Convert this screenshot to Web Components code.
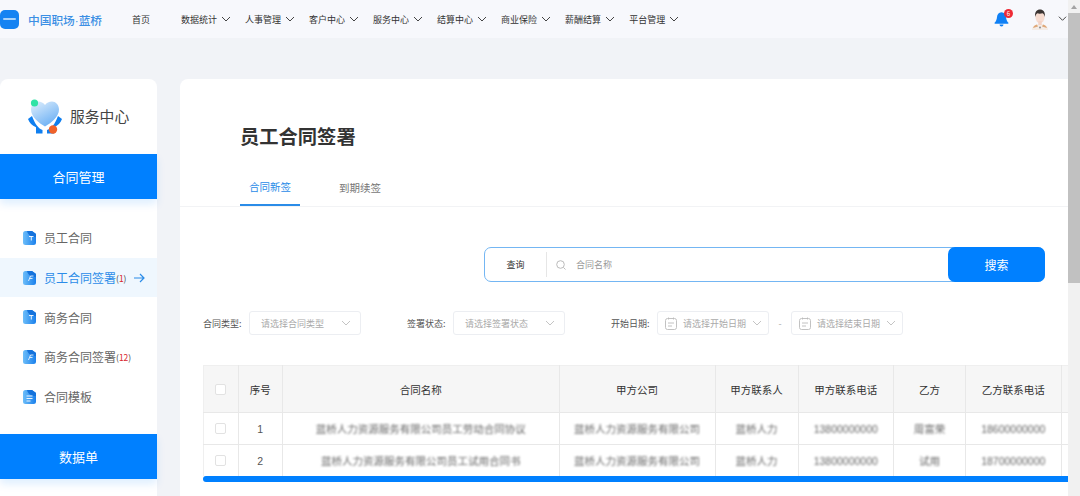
<!DOCTYPE html>
<html lang="zh">
<head>
<meta charset="utf-8">
<title>员工合同签署</title>
<style>
html, body { margin: 0; height: 100%; overflow: hidden; }
body { font-family: "Noto Sans CJK SC", "Noto Sans", sans-serif; color: #333; background: #f1f3f7; }
side-item b { font-weight: 400; color: #d9262c; }
</style>
</head>
<body>
<app-shell>
    <top-bar></top-bar>
    <side-menu slot="side">
        <side-item icon="plus">员工合同</side-item>
        <side-item icon="sign" active>员工合同签署<span slot="count">(<b>1</b>)</span></side-item>
        <side-item icon="plus">商务合同</side-item>
        <side-item icon="sign">商务合同签署<span slot="count">(<b>12</b>)</span></side-item>
        <side-item icon="lines">合同模板</side-item>
    </side-menu>
    <main-panel slot="main" heading="员工合同签署">
        <search-box></search-box>
        <filter-row></filter-row>
        <contract-table></contract-table>
    </main-panel>
</app-shell>

<script>
const chevron = (size, color) => `<svg width="${size}" height="${size}" viewBox="0 0 10 10" fill="none" stroke="${color}" stroke-width="1"><path d="M1 3l4 4 4-4"/></svg>`;

class AppShell extends HTMLElement {
    constructor() {
        super();
        this.attachShadow({ mode: 'open' });
        this.shadowRoot.innerHTML = `<style>
        :host { display: grid; grid-template-columns: 1fr 12px; width: 1080px; height: 496px; overflow: hidden; }
        .page { display: flex; flex-direction: column; min-width: 0; height: 496px; overflow: hidden; }
        .body { display: flex; gap: 23px; padding-top: 41px; flex: 1; min-height: 0; }
        .bar { background: #f1f1f1; display: flex; flex-direction: column; align-items: center; height: 496px; }
        .arrow { height: 13px; display: flex; align-items: center; justify-content: center; }
        .arrow i { border: 3.5px solid transparent; border-top: 0; border-bottom: 4px solid #a3a3a3; }
        .thumb { width: 100%; height: 270px; background: #c1c1c1; }
        </style>
        <div class="page">
            <slot></slot>
            <div class="body">
                <slot name="side"></slot>
                <slot name="main"></slot>
            </div>
        </div>
        <div class="bar"><div class="arrow"><i></i></div><div class="thumb"></div></div>`;
    }
}

class TopBar extends HTMLElement {
    constructor() {
        super();
        this.attachShadow({ mode: 'open' });
        const menus = ['数据统计', '人事管理', '客户中心', '服务中心', '结算中心', '商业保险', '薪酬结算', '平台管理'];
        this.shadowRoot.innerHTML = `<style>
        :host { display: flex; align-items: center; height: 38px; background: #f7f8fc; font-size: 9px; color: #333; flex: none; }
        .logo { width: 19px; height: 19px; background: #1683f2; border-radius: 5px; display: flex; align-items: center; justify-content: center; margin-right: 9px; }
        .logo i { width: 13px; height: 2px; background: #a9d2fa; border-radius: 1px; }
        .brand { font-family: "Liberation Sans", "Noto Sans CJK SC", sans-serif; font-size: 11.700px; font-weight: 500; color: #3b8fe4; width: 104px; white-space: nowrap; }
        .home { margin-right: 31px; }
        nav { display: flex; gap: 14px; flex: 1; }
        .item { display: flex; align-items: center; gap: 4px; }
        .bell { position: relative; width: 14px; height: 16px; margin-right: 23px; }
        .badge { position: absolute; left: 10px; top: -2px; width: 9px; height: 9px; border-radius: 50%; background: #ee2a35; color: #fff; font-size: 6px; line-height: 9px; text-align: center; }
        .face { margin-right: 9px; display: block; }
        .more { margin-right: 1px; display: block; }
        </style>
        <div class="logo"><i></i></div>
        <div class="brand">中国职场·蓝桥</div>
        <div class="home">首页</div>
        <nav>${menus.map(m => `<div class="item">${m}${chevron(10, '#444')}</div>`).join('')}</nav>
        <div class="bell">
            <svg width="15" height="16" viewBox="0 0 15 16"><path d="M7.500 1.200C4.600 1.200 3.200 3.400 3 6c-.2 2.600-1 4.400-2.400 5.800-.3.4-.1.9.4.9h13c.5 0 .7-.5.4-.9C13 10.400 12.200 8.600 12 6c-.2-2.600-1.600-4.800-4.500-4.800z" fill="#0f80f5"/><path d="M5.500 13.600a2 2 0 0 0 4 0z" fill="#0f80f5"/></svg>
            <span class="badge">6</span>
        </div>
        <svg class="face" width="18" height="22" viewBox="0 0 18 22">
            <path d="M1 22c0-4 3-5.500 8-5.500s8 1.500 8 5.500z" fill="#f4ece6"/>
            <path d="M2 20c.5-2 2-3 4-3.500l1 2zM16 20c-.5-2-2-3-4-3.500l-1 2z" fill="#dfa878"/>
            <ellipse cx="9" cy="9" rx="4.600" ry="6.200" fill="#f7dcd0"/>
            <rect x="7.300" y="13" width="3.400" height="4" fill="#f3d3c6"/>
            <path d="M4.200 9C3.500 3.800 6 1.600 9 1.600s5.500 2.200 4.800 7.400c-.4-2-1.200-3.500-2.300-3.800-1.800.6-4 .6-5 0C5.400 5.700 4.600 7 4.200 9z" fill="#3a3432"/>
            <circle cx="9" cy="19.500" r="1" fill="#8a8f96"/>
        </svg>
        <div class="more">${chevron(9, '#333')}</div>`;
    }
}

class SideMenu extends HTMLElement {
    constructor() {
        super();
        this.attachShadow({ mode: 'open' });
        this.shadowRoot.innerHTML = `<style>
        :host { display: block; width: 157px; flex: none; background: #fff; border-radius: 8px 8px 0 0; }
        .head { height: 75px; display: flex; align-items: center; padding-left: 27px; gap: 7px; font-size: 14.800px; color: #444; box-sizing: border-box; }
        .head span { margin-top: -2px; }
        .head svg { display: block; }
        .group { height: 45px; padding-bottom: 1px; box-sizing: border-box; background: #0080ff; color: #fff; font-size: 13px; display: flex; align-items: center; justify-content: center; box-shadow: 0 5px 8px rgba(0, 128, 255, .13); position: relative; }
        .list { padding: 19px 0 18px; display: flex; flex-direction: column; }
        </style>
        <div class="head">
            <svg width="36" height="38" viewBox="0 0 36 38">
                <defs><linearGradient id="heart" x1=".1" y1="0" x2=".7" y2="1"><stop offset="0" stop-color="#dcedfc"/><stop offset="1" stop-color="#6aaff4"/></linearGradient></defs>
                <path d="M1 21c1.500 4 4 6.500 8 8.200V35.500h6.500v-3.400C11 30 8 26 5 18z" fill="#0f7ff0"/>
                <path d="M35 21c-1.500 4-4 6.500-8 8.200V35.500h-7v-3.400C25 30 28 26 31 18z" fill="#0f7ff0"/>
                <path d="M18 28.500C12 25 4 19 4 11.500 4 6.500 7.500 3.500 11 3.500c3 0 5.500 1.300 7 3.500 1.500-2.200 4-3.500 7-3.500 3.500 0 7 3 7 8 0 7.500-8 13.500-14 17z" fill="url(#heart)"/>
                <circle cx="7.500" cy="5" r="3.600" fill="#2fe3a6"/>
                <circle cx="26" cy="31.500" r="4.200" fill="#f0622a"/>
            </svg>
            <span>服务中心</span>
        </div>
        <div class="group">合同管理</div>
        <div class="list"><slot></slot></div>
        <div class="group">数据单</div>`;
    }
}

class SideItem extends HTMLElement {
    constructor() {
        super();
        this.attachShadow({ mode: 'open' });
    }
    connectedCallback() {
        const marks = {
            plus: '<path d="M6 5.500h4.500M8.300 5.500v4" stroke="#fff" fill="none" stroke-width=".9"/>',
            sign: '<path d="M5.500 10l2-5h3M7 7.500h2.500" stroke="#fff" fill="none" stroke-width=".8"/>',
            lines: '<path d="M3.500 6h6M3.500 8.500h6M3.500 11h4" stroke="#fff" fill="none" stroke-width=".9"/>'
        };
        const active = this.hasAttribute('active');
        this.shadowRoot.innerHTML = `<style>
        :host { display: flex; align-items: center; height: 39.700px; padding-left: 23px; font-size: 12px; color: #666; }
        :host([active]) { background: #eff7fe; color: #2b8ce8; }
        svg { display: block; margin-right: 8px; flex: none; }
        .arrow { margin-left: 8px; }
        ::slotted([slot=count]) { font-size: 8.500px; color: #444; }
        </style>
        <svg width="13" height="14" viewBox="0 0 13 14">
            <defs><linearGradient id="file" x1="0" y1=".5" x2="1" y2=".5"><stop offset="0" stop-color="#6cbdf9"/><stop offset="1" stop-color="#1a80ec"/></linearGradient></defs>
            <path d="M2.500 0h6.500l4 3v8.500a2.500 2.500 0 0 1-2.500 2.500h-8A2.500 2.500 0 0 1 0 11.500v-9A2.500 2.500 0 0 1 2.500 0z" fill="url(#file)"/>
            <path d="M4 0h5l4 3v3C9 6 5 4.500 4 0z" fill="#1573dc"/>
            ${marks[this.getAttribute('icon')]}
        </svg>
        <slot></slot><slot name="count"></slot>
        ${active ? '<svg class="arrow" width="11" height="10" viewBox="0 0 11 10" fill="none" stroke="#2b8ce8" stroke-width="1.200"><path d="M0 5h10M6 1l4 4-4 4"/></svg>' : ''}`;
    }
}

class MainPanel extends HTMLElement {
    constructor() {
        super();
        this.attachShadow({ mode: 'open' });
    }
    connectedCallback() {
        this.shadowRoot.innerHTML = `<style>
        :host { display: block; flex: 1; min-width: 0; background: #fff; border-radius: 8px 0 0 0; overflow: hidden; }
        h1 { margin: 43px 0 18px 60px; font-size: 19.300px; line-height: 28px; font-weight: 700; color: #333; }
        .tabs { display: flex; height: 38px; padding-left: 60px; border-bottom: 1px solid #f2f3f5; font-size: 10.500px; color: #777; }
        .tab { width: 60px; display: flex; align-items: center; justify-content: center; margin-right: 30px; box-sizing: border-box; height: 38px; }
        .tab.on { color: #2b8ce8; border-bottom: 2px solid #2b8ce8; }
        </style>
        <h1>${this.getAttribute('heading')}</h1>
        <div class="tabs"><div class="tab on">合同新签</div><div class="tab">到期续签</div></div>
        <slot></slot>`;
    }
}

class SearchBox extends HTMLElement {
    constructor() {
        super();
        this.attachShadow({ mode: 'open' });
        this.shadowRoot.innerHTML = `<style>
        :host { display: flex; align-items: center; box-sizing: border-box; width: 561px; height: 35px; margin: 40px 23px 0 auto; border: 1px solid #74b6f3; border-radius: 7px; font-size: 9px; }
        .kind { width: 62px; height: 25px; display: flex; align-items: center; justify-content: center; border-right: 1px solid #e6e6e6; box-sizing: border-box; color: #333; margin-right: 9px; }
        svg { display: block; margin-right: 10px; }
        .hint { flex: 1; color: #999; }
        .go { width: 97px; height: 35px; margin: 0 -1px 0 0; background: #0080ff; color: #fff; font-size: 12px; border-radius: 7px; display: flex; align-items: center; justify-content: center; }
        </style>
        <div class="kind">查询</div>
        <svg width="10" height="10" viewBox="0 0 10 10" fill="none" stroke="#bbb"><circle cx="4.500" cy="4.500" r="3.800"/><path d="M7.500 7.500l2 2"/></svg>
        <div class="hint">合同名称</div>
        <div class="go">搜索</div>`;
    }
}

class FilterField extends HTMLElement {
    constructor() {
        super();
        this.attachShadow({ mode: 'open' });
    }
    connectedCallback() {
        const dated = this.hasAttribute('date');
        this.shadowRoot.innerHTML = `<style>
        :host { display: flex; align-items: center; box-sizing: border-box; width: 112px; height: 24px; border: 1px solid #eceef2; border-radius: 3px; font-size: 9px; color: #aaa; padding: 0 9px 0 ${dated ? 7 : 11}px; gap: 6px; white-space: nowrap; }
        span { flex: 1; }
        svg { display: block; flex: none; }
        </style>
        ${dated ? '<svg width="12" height="13" viewBox="0 0 12 13" fill="none" stroke="#bbb" stroke-width=".9"><rect x=".5" y="1.500" width="11" height="11" rx="2"/><path d="M3.500 .5v2M8.500 .5v2M3 6h6M3 9h4"/></svg>' : ''}
        <span>${this.getAttribute('hint')}</span>
        ${chevron(10, '#c4c4c4')}`;
    }
}

class FilterRow extends HTMLElement {
    constructor() {
        super();
        this.attachShadow({ mode: 'open' });
        this.shadowRoot.innerHTML = `<style>
        :host { display: flex; align-items: center; height: 24px; margin-top: 29px; padding-left: 23px; font-size: 9px; color: #555; }
        .label { width: 37px; margin-right: 9px; white-space: nowrap; }
        .after { margin-left: 46px; }
        .dash { width: 22px; text-align: center; color: #aaa; }
        </style>
        <div class="label">合同类型:</div><filter-field hint="请选择合同类型"></filter-field>
        <div class="label after">签署状态:</div><filter-field hint="请选择签署状态"></filter-field>
        <div class="label after">开始日期:</div><filter-field date hint="请选择开始日期"></filter-field>
        <div class="dash">-</div><filter-field date hint="请选择结束日期"></filter-field>`;
    }
}

class ContractTable extends HTMLElement {
    constructor() {
        super();
        this.attachShadow({ mode: 'open' });
        const rows = [
            ['1', '蓝桥人力资源服务有限公司员工劳动合同协议', '蓝桥人力资源服务有限公司', '蓝桥人力', '13800000000', '周富荣', '18600000000'],
            ['2', '蓝桥人力资源服务有限公司员工试用合同书', '蓝桥人力资源服务有限公司', '蓝桥人力', '13800000000', '试用', '18700000000']
        ];
        const widths = [34.500, 44.500, 276.500, 156, 83, 95.500, 72, 95.500, 40];
        const heads = ['', '序号', '合同名称', '甲方公司', '甲方联系人', '甲方联系电话', '乙方', '乙方联系电话', ''];
        this.shadowRoot.innerHTML = `<style>
        :host { display: block; margin: 30px 0 0 23px; overflow: hidden; font-family: "Liberation Sans", "Noto Sans CJK SC", sans-serif; font-size: 10.500px; color: #444; }
        table { border-collapse: collapse; table-layout: fixed; width: 898px; }
        th, td { border: 1px solid #e8e8e8; text-align: center; padding: 0; overflow: hidden; white-space: nowrap; }
        th { height: 46px; background: #f6f6f6; font-weight: 400; color: #333; border-top-color: #efefef; }
        td { height: 31px; color: #555; }
        tbody tr:last-child td { border-bottom: 0; }
        th:first-child, td:first-child { border-left-color: #efefef; }
        .box { display: block; width: 9px; height: 9px; margin: auto; border: 1px solid #e2e2e2; border-radius: 2px; background: #fff; }
        .fuzzy { filter: blur(1px); color: #666; }
        .scroll { height: 6px; background: #0080ff; border-radius: 3px 0 0 3px; }
        </style>
        <table>
            <colgroup>${widths.map(w => `<col style="width:${w}px">`).join('')}</colgroup>
            <thead><tr>${heads.map((h, i) => `<th>${i ? h : '<span class="box"></span>'}</th>`).join('')}</tr></thead>
            <tbody>${rows.map(r => `<tr><td><span class="box"></span></td><td>${r[0]}</td>${r.slice(1).map(c => `<td><div class="fuzzy">${c}</div></td>`).join('')}<td></td></tr>`).join('')}</tbody>
        </table>
        <div class="scroll"></div>`;
    }
}

customElements.define('app-shell', AppShell);
customElements.define('top-bar', TopBar);
customElements.define('side-menu', SideMenu);
customElements.define('side-item', SideItem);
customElements.define('main-panel', MainPanel);
customElements.define('search-box', SearchBox);
customElements.define('filter-field', FilterField);
customElements.define('filter-row', FilterRow);
customElements.define('contract-table', ContractTable);
</script>
</body>
</html>
